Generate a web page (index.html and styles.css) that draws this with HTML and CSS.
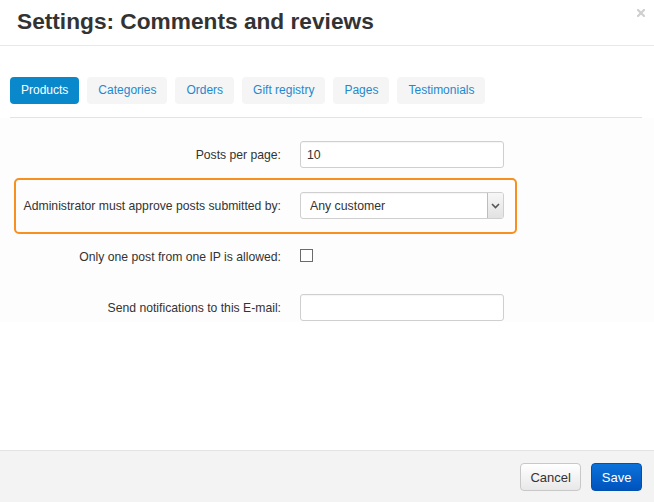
FILE: index.html
```html
<!DOCTYPE html>
<html>
<head>
<meta charset="utf-8">
<link rel="stylesheet" href="styles.css">
</head>
<body>
<div class="dialog">
  <div class="header">
    <h1 class="title">Settings: Comments and reviews</h1>
    <span class="close"><svg width="8" height="8" viewBox="0 0 8 8"><path d="M1 1L7 7M7 1L1 7" stroke="#cfcfcf" stroke-width="2.2" stroke-linecap="square"/></svg></span>
  </div>
  <div class="tabs-wrap">
    <div class="tabs">
      <span class="tab active">Products</span>
      <span class="tab">Categories</span>
      <span class="tab">Orders</span>
      <span class="tab">Gift registry</span>
      <span class="tab">Pages</span>
      <span class="tab">Testimonials</span>
    </div>
  </div>
  <div class="pane">
    <div class="row">
      <label class="label">Posts per page:</label>
      <input class="field" type="text" value="10">
    </div>
    <div class="row highlight">
      <label class="label">Administrator must approve posts submitted by:</label>
      <span class="select-wrap">
        <select class="field select"><option>Any customer</option></select>
        <span class="arrow"><svg width="9" height="6" viewBox="0 0 9 6"><path d="M1 1L4.5 4.5L8 1" fill="none" stroke="#555" stroke-width="1.6"/></svg></span>
      </span>
    </div>
    <div class="row check-row">
      <label class="label">Only one post from one IP is allowed:</label>
      <input class="check" type="checkbox">
    </div>
    <div class="row email-row">
      <label class="label">Send notifications to this E-mail:</label>
      <input class="field" type="text" value="">
    </div>
  </div>
  <div class="spacer"></div>
  <div class="footer">
    <button class="btn cancel">Cancel</button>
    <button class="btn save">Save</button>
  </div>
</div>
</body>
</html>
```

FILE: styles.css
```css
html, body {
  margin: 0;
  padding: 0;
}
body {
  width: 654px;
  height: 502px;
  overflow: hidden;
  background: #fff;
  font-family: "Liberation Sans", Arial, sans-serif;
  color: #333;
}
.dialog {
  height: 502px;
  display: flex;
  flex-direction: column;
}
.header {
  height: 45px;
  flex: none;
  border-bottom: 1px solid #e8e8e8;
  display: flex;
  justify-content: space-between;
  align-items: flex-start;
  padding: 0 9px 0 17px;
}
.title {
  margin: 8px 0 0;
  font-size: 22.7px;
  line-height: 26px;
  font-weight: bold;
  color: #333;
}
.close {
  margin-top: 9px;
  display: flex;
}
.tabs-wrap {
  margin: 31px 12px 0 10px;
  padding-bottom: 13px;
  border-bottom: 1px solid #e3e3e3;
}
.tabs {
  display: flex;
  gap: 8px;
}
.tab {
  font-size: 12px;
  line-height: 27px;
  height: 27px;
  padding: 0 11px;
  border-radius: 4px;
  background: #f5f5f5;
  color: #1f88cf;
}
.tab.active {
  background: #0a88cc;
  color: #fff;
}
.pane {
  background: #fdfdfd;
  padding: 23px 0 1px;
}
.row {
  margin-left: 14px;
  width: 503px;
  box-sizing: border-box;
  border: 0 solid transparent;
  border-left-width: 2px;
  border-right-width: 2px;
  border-radius: 5px;
  padding: 0 11px 0 0;
  display: flex;
  align-items: center;
  gap: 19px;
  min-height: 27px;
}
.label {
  width: 265px;
  flex: none;
  text-align: right;
  font-size: 12.2px;
  color: #333;
}
.field {
  width: 204px;
  height: 27px;
  box-sizing: border-box;
  border: 1px solid #cfcfcf;
  border-radius: 3px;
  background: #fff;
  font-family: "Liberation Sans", Arial, sans-serif;
  font-size: 12.3px;
  color: #333;
  padding: 0 6px;
  margin: 0;
  box-shadow: inset 0 1px 1px rgba(0,0,0,0.04);
  outline: none;
}
.highlight {
  margin-top: 10px;
  border: 2px solid #f7901e;
  padding-top: 12px;
  padding-bottom: 13px;
}
.select-wrap {
  position: relative;
  display: flex;
}
.select {
  appearance: none;
  -webkit-appearance: none;
  padding-left: 9px;
}
.arrow {
  position: absolute;
  right: 1px;
  top: 1px;
  bottom: 1px;
  width: 15px;
  border-left: 1px solid #bdbdbd;
  border-radius: 0 2px 2px 0;
  background: linear-gradient(#f7f7f7, #e2e2e2);
  display: flex;
  align-items: center;
  justify-content: center;
}
.check-row {
  margin-top: 9px;
}
.check {
  appearance: none;
  -webkit-appearance: none;
  width: 13px;
  height: 13px;
  margin: 0 0 2px;
  border: 1px solid #6b6b6b;
  background: #fff;
  box-sizing: border-box;
}
.email-row {
  margin-top: 24px;
}
.spacer {
  flex: 1;
}
.footer {
  flex: none;
  height: 52px;
  border-top: 1px solid #e3e3e3;
  background: #f3f3f3;
  display: flex;
  justify-content: flex-end;
  align-items: flex-start;
  gap: 10px;
  padding: 12px 12px 0 0;
  box-sizing: border-box;
}
.btn {
  height: 28px;
  padding: 0 9.5px;
  font-family: "Liberation Sans", Arial, sans-serif;
  font-size: 13px;
  border-radius: 4px;
  margin: 0;
  cursor: pointer;
}
.cancel {
  background: linear-gradient(#ffffff, #e8e8e8);
  border: 1px solid #c8c8c8;
  color: #333;
}
.save {
  background: linear-gradient(#0b72d9, #0053bd);
  border: 1px solid #0050b0;
  color: #fff;
}
```
